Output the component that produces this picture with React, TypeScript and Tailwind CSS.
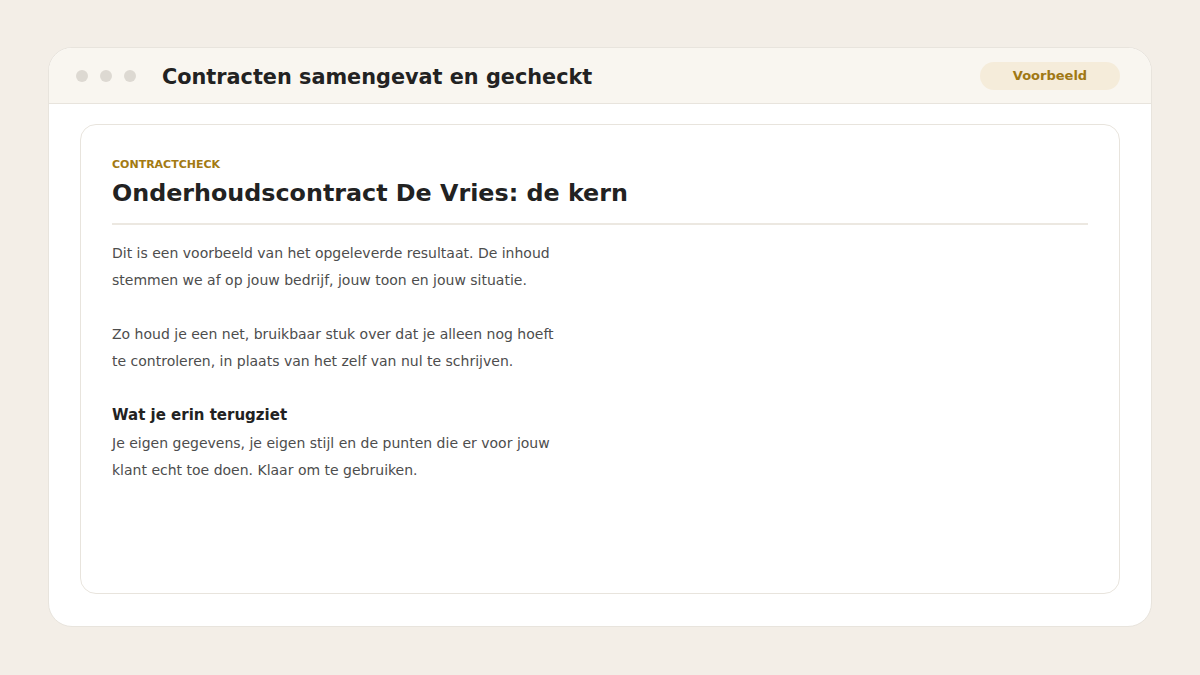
export default function App() {
  return (
    <div className="w-[1200px] h-[675px] bg-[#f3eee7] px-12 pt-[47px] pb-12 font-['DejaVu_Sans',sans-serif]">
      <div className="h-[580px] flex flex-col bg-white border border-[#e8e4dd] rounded-[24px] overflow-hidden">
        {/* window bar */}
        <div className="h-[56px] shrink-0 flex items-center bg-[#f9f6f0] border-b border-[#e8e4dd] pl-[27px] pr-[31px]">
          <div className="flex gap-3">
            <span className="w-3 h-3 rounded-full bg-[#ddd9d2]"></span>
            <span className="w-3 h-3 rounded-full bg-[#ddd9d2]"></span>
            <span className="w-3 h-3 rounded-full bg-[#ddd9d2]"></span>
          </div>
          <h1 className="ml-[26px] mt-1 text-[20.8px] font-bold text-[#222222]">Contracten samengevat en gecheckt</h1>
          <span className="ml-auto w-[140px] h-7 rounded-full bg-[#f5ecda] flex items-center justify-center text-[13px] font-bold text-[#a07814]">
            Voorbeeld
          </span>
        </div>

        <div className="flex-1 flex flex-col px-[31px] pt-5 pb-8">
          <div className="flex-1 border border-[#e8e4dd] rounded-2xl px-[31px] pt-8">
            <p className="text-[11px] leading-4 font-bold text-[#a37a12]">CONTRACTCHECK</p>
            <h2 className="mt-[5px] text-[23.8px] leading-[30px] font-bold text-[#222222]">Onderhoudscontract De Vries: de kern</h2>
            <div className="mt-[15px] mb-[15px] h-[2px] bg-[#ece8e1]"></div>

            <div className="max-w-[455px] text-[14px] leading-[27px] text-[#4d4d4d]">
              <p>Dit is een voorbeeld van het opgeleverde resultaat. De inhoud stemmen we af op jouw bedrijf, jouw toon en jouw situatie.</p>
              <p className="mt-[27px]">Zo houd je een net, bruikbaar stuk over dat je alleen nog hoeft te controleren, in plaats van het zelf van nul te schrijven.</p>
              <h3 className="mt-[30px] mb-[5px] text-[15px] leading-5 font-bold text-[#222222]">Wat je erin terugziet</h3>
              <p>Je eigen gegevens, je eigen stijl en de punten die er voor jouw klant echt toe doen. Klaar om te gebruiken.</p>
            </div>
          </div>
        </div>
      </div>
    </div>
  );
}
